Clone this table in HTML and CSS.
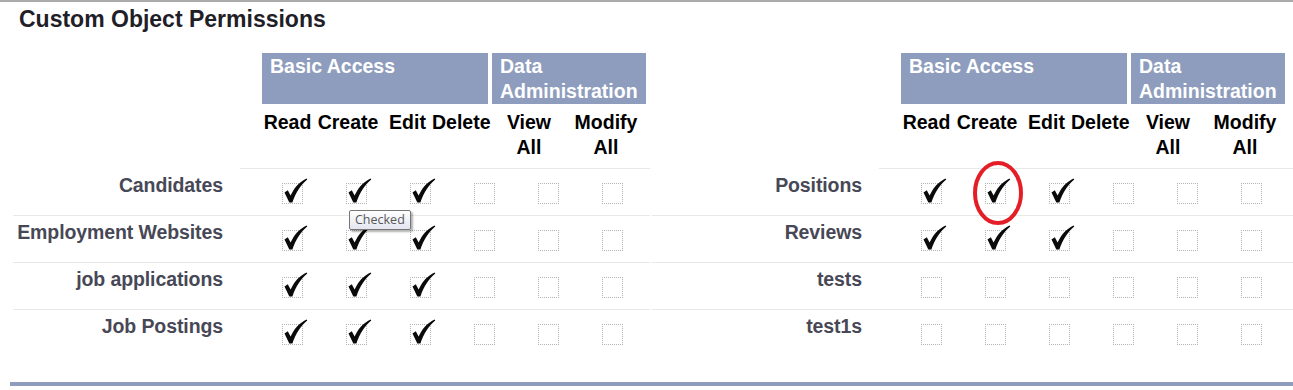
FILE: index.html
```html
<!DOCTYPE html>
<html>
<head>
<meta charset="utf-8">
<link rel="stylesheet" href="styles.css">
</head>
<body>
<div class="page">
  <h2 class="title">Custom Object Permissions</h2>
  <div class="halves">
    <div class="half half-left">
      <div class="hdr-row">
        <div class="lbl-space"></div>
        <div class="data groups">
          <div class="grp grp-basic">Basic Access</div>
          <div class="grp grp-admin">Data Administration</div>
        </div>
      </div>
      <div class="col-row">
        <div class="lbl-space"></div>
        <div class="data cols">
          <div class="col">Read</div>
          <div class="col">Create</div>
          <div class="col">Edit</div>
          <div class="col">Delete</div>
          <div class="col col-view">View<br>All</div>
          <div class="col">Modify<br>All</div>
        </div>
      </div>
      <div class="row">
        <div class="lbl">Candidates</div>
        <div class="data cells">
          <span class="cb"><svg class="tick" viewBox="0 0 26 28"><path d="M1.5,14.5 L4.8,12.2 L7.6,17.6 C11,10 16,4 23.5,0.4 L24.3,1.6 C18.2,6.4 12.8,14.2 9.4,24.6 L6.3,24.6 Z"/></svg></span>
          <span class="cb"><svg class="tick" viewBox="0 0 26 28"><path d="M1.5,14.5 L4.8,12.2 L7.6,17.6 C11,10 16,4 23.5,0.4 L24.3,1.6 C18.2,6.4 12.8,14.2 9.4,24.6 L6.3,24.6 Z"/></svg></span>
          <span class="cb"><svg class="tick" viewBox="0 0 26 28"><path d="M1.5,14.5 L4.8,12.2 L7.6,17.6 C11,10 16,4 23.5,0.4 L24.3,1.6 C18.2,6.4 12.8,14.2 9.4,24.6 L6.3,24.6 Z"/></svg></span>
          <span class="cb"></span>
          <span class="cb"></span>
          <span class="cb"></span>
        </div>
      </div>
      <div class="row">
        <div class="lbl">Employment Websites</div>
        <div class="data cells">
          <span class="cb"><svg class="tick" viewBox="0 0 26 28"><path d="M1.5,14.5 L4.8,12.2 L7.6,17.6 C11,10 16,4 23.5,0.4 L24.3,1.6 C18.2,6.4 12.8,14.2 9.4,24.6 L6.3,24.6 Z"/></svg></span>
          <span class="cb"><svg class="tick" viewBox="0 0 26 28"><path d="M1.5,14.5 L4.8,12.2 L7.6,17.6 C11,10 16,4 23.5,0.4 L24.3,1.6 C18.2,6.4 12.8,14.2 9.4,24.6 L6.3,24.6 Z"/></svg></span>
          <span class="cb"><svg class="tick" viewBox="0 0 26 28"><path d="M1.5,14.5 L4.8,12.2 L7.6,17.6 C11,10 16,4 23.5,0.4 L24.3,1.6 C18.2,6.4 12.8,14.2 9.4,24.6 L6.3,24.6 Z"/></svg></span>
          <span class="cb"></span>
          <span class="cb"></span>
          <span class="cb"></span>
        </div>
      </div>
      <div class="row">
        <div class="lbl">job applications</div>
        <div class="data cells">
          <span class="cb"><svg class="tick" viewBox="0 0 26 28"><path d="M1.5,14.5 L4.8,12.2 L7.6,17.6 C11,10 16,4 23.5,0.4 L24.3,1.6 C18.2,6.4 12.8,14.2 9.4,24.6 L6.3,24.6 Z"/></svg></span>
          <span class="cb"><svg class="tick" viewBox="0 0 26 28"><path d="M1.5,14.5 L4.8,12.2 L7.6,17.6 C11,10 16,4 23.5,0.4 L24.3,1.6 C18.2,6.4 12.8,14.2 9.4,24.6 L6.3,24.6 Z"/></svg></span>
          <span class="cb"><svg class="tick" viewBox="0 0 26 28"><path d="M1.5,14.5 L4.8,12.2 L7.6,17.6 C11,10 16,4 23.5,0.4 L24.3,1.6 C18.2,6.4 12.8,14.2 9.4,24.6 L6.3,24.6 Z"/></svg></span>
          <span class="cb"></span>
          <span class="cb"></span>
          <span class="cb"></span>
        </div>
      </div>
      <div class="row row-last">
        <div class="lbl">Job Postings</div>
        <div class="data cells">
          <span class="cb"><svg class="tick" viewBox="0 0 26 28"><path d="M1.5,14.5 L4.8,12.2 L7.6,17.6 C11,10 16,4 23.5,0.4 L24.3,1.6 C18.2,6.4 12.8,14.2 9.4,24.6 L6.3,24.6 Z"/></svg></span>
          <span class="cb"><svg class="tick" viewBox="0 0 26 28"><path d="M1.5,14.5 L4.8,12.2 L7.6,17.6 C11,10 16,4 23.5,0.4 L24.3,1.6 C18.2,6.4 12.8,14.2 9.4,24.6 L6.3,24.6 Z"/></svg></span>
          <span class="cb"><svg class="tick" viewBox="0 0 26 28"><path d="M1.5,14.5 L4.8,12.2 L7.6,17.6 C11,10 16,4 23.5,0.4 L24.3,1.6 C18.2,6.4 12.8,14.2 9.4,24.6 L6.3,24.6 Z"/></svg></span>
          <span class="cb"></span>
          <span class="cb"></span>
          <span class="cb"></span>
        </div>
      </div>
    </div>

    <div class="half half-right">
      <div class="hdr-row">
        <div class="lbl-space"></div>
        <div class="data groups">
          <div class="grp grp-basic">Basic Access</div>
          <div class="grp grp-admin">Data Administration</div>
        </div>
      </div>
      <div class="col-row">
        <div class="lbl-space"></div>
        <div class="data cols">
          <div class="col">Read</div>
          <div class="col">Create</div>
          <div class="col">Edit</div>
          <div class="col">Delete</div>
          <div class="col col-view">View<br>All</div>
          <div class="col">Modify<br>All</div>
        </div>
      </div>
      <div class="row">
        <div class="lbl">Positions</div>
        <div class="data cells">
          <span class="cb"><svg class="tick" viewBox="0 0 26 28"><path d="M1.5,14.5 L4.8,12.2 L7.6,17.6 C11,10 16,4 23.5,0.4 L24.3,1.6 C18.2,6.4 12.8,14.2 9.4,24.6 L6.3,24.6 Z"/></svg></span>
          <span class="cb"><svg class="tick" viewBox="0 0 26 28"><path d="M1.5,14.5 L4.8,12.2 L7.6,17.6 C11,10 16,4 23.5,0.4 L24.3,1.6 C18.2,6.4 12.8,14.2 9.4,24.6 L6.3,24.6 Z"/></svg></span>
          <span class="cb"><svg class="tick" viewBox="0 0 26 28"><path d="M1.5,14.5 L4.8,12.2 L7.6,17.6 C11,10 16,4 23.5,0.4 L24.3,1.6 C18.2,6.4 12.8,14.2 9.4,24.6 L6.3,24.6 Z"/></svg></span>
          <span class="cb"></span>
          <span class="cb"></span>
          <span class="cb"></span>
        </div>
      </div>
      <div class="row">
        <div class="lbl">Reviews</div>
        <div class="data cells">
          <span class="cb"><svg class="tick" viewBox="0 0 26 28"><path d="M1.5,14.5 L4.8,12.2 L7.6,17.6 C11,10 16,4 23.5,0.4 L24.3,1.6 C18.2,6.4 12.8,14.2 9.4,24.6 L6.3,24.6 Z"/></svg></span>
          <span class="cb"><svg class="tick" viewBox="0 0 26 28"><path d="M1.5,14.5 L4.8,12.2 L7.6,17.6 C11,10 16,4 23.5,0.4 L24.3,1.6 C18.2,6.4 12.8,14.2 9.4,24.6 L6.3,24.6 Z"/></svg></span>
          <span class="cb"><svg class="tick" viewBox="0 0 26 28"><path d="M1.5,14.5 L4.8,12.2 L7.6,17.6 C11,10 16,4 23.5,0.4 L24.3,1.6 C18.2,6.4 12.8,14.2 9.4,24.6 L6.3,24.6 Z"/></svg></span>
          <span class="cb"></span>
          <span class="cb"></span>
          <span class="cb"></span>
        </div>
      </div>
      <div class="row">
        <div class="lbl">tests</div>
        <div class="data cells">
          <span class="cb"></span>
          <span class="cb"></span>
          <span class="cb"></span>
          <span class="cb"></span>
          <span class="cb"></span>
          <span class="cb"></span>
        </div>
      </div>
      <div class="row row-last">
        <div class="lbl">test1s</div>
        <div class="data cells">
          <span class="cb"></span>
          <span class="cb"></span>
          <span class="cb"></span>
          <span class="cb"></span>
          <span class="cb"></span>
          <span class="cb"></span>
        </div>
      </div>
    </div>
  </div>
  <div class="bottom-rule"></div>

  <div class="tooltip">Checked</div>
  <svg class="circle" viewBox="0 0 56 70"><ellipse cx="28" cy="35" rx="23" ry="30"/></svg>
</div>
</body>
</html>
```

FILE: styles.css
```css
html, body {
  margin: 0;
  padding: 0;
  background: #fff;
}

.page {
  position: relative;
  width: 1293px;
  height: 390px;
  border-top: 2px solid #ababab;
  box-sizing: border-box;
  font-family: "Liberation Sans", Arial, sans-serif;
  overflow: hidden;
}

.title {
  margin: 3px 0 0 19px;
  font-size: 23px;
  line-height: 28px;
  font-weight: bold;
  color: #1f2027;
}

.halves {
  display: flex;
  gap: 2px;
  margin: 20px 0 0 13px;
}

.half-left {
  width: 637px;
  flex: none;
}

.half-right {
  flex: 1;
}

.hdr-row,
.col-row,
.row {
  display: flex;
}

.lbl-space,
.lbl {
  width: 227px;
  flex: none;
  box-sizing: border-box;
}

.data {
  flex: 1;
}

.groups {
  display: flex;
  gap: 4px;
  padding-left: 22px;
}

.grp {
  background: #8e9dbd;
  color: #fff;
  font-weight: bold;
  font-size: 19.5px;
  line-height: 25px;
  padding: 1px 0 0 8px;
  box-sizing: border-box;
  height: 51px;
}

.grp-basic {
  width: 226px;
}

.grp-admin {
  width: 154px;
}

.cols {
  display: grid;
  grid-template-columns: 51px 70px 49px 56px 78px 80px;
  padding: 6px 0 8px 22px;
  border-bottom: 1px solid #e8e8e8;
}

.col {
  font-weight: bold;
  font-size: 19.5px;
  line-height: 25px;
  color: #000;
  text-align: center;
}

.col-view {
  padding-left: 4px;
}

.row {
  height: 47px;
  box-sizing: border-box;
  border-bottom: 1px solid #e8e8e8;
}

.row-last {
  border-bottom: none;
}

.lbl {
  padding: 4px 17px 0 0;
  text-align: right;
  font-weight: bold;
  font-size: 19.5px;
  letter-spacing: -0.1px;
  line-height: 25px;
  color: #474856;
  white-space: nowrap;
}

.cells {
  display: grid;
  grid-template-columns: repeat(6, 64px);
  justify-items: center;
  align-items: start;
  padding: 14px 0 0 20px;
}

.cb {
  position: relative;
  display: block;
  width: 19px;
  height: 19px;
  border: 1px dotted #b4b4b4;
}

.tick {
  position: absolute;
  left: 0px;
  top: -6px;
  width: 26px;
  height: 28px;
  fill: #0a0a0a;
}

.bottom-rule {
  margin: 25px 0 0 10px;
  border-top: 4px solid #8e9dbd;
}

.tooltip {
  position: absolute;
  left: 349px;
  top: 208px;
  height: 18px;
  padding: 0 5px;
  border: 1px solid #767676;
  border-radius: 2px;
  background: linear-gradient(#ffffff, #e4e5f0);
  box-shadow: 2px 2px 2px rgba(0, 0, 0, 0.3);
  font-family: "Open Sans", "Noto Sans", sans-serif;
  font-size: 12.5px;
  line-height: 18px;
  color: #575757;
}

.circle {
  position: absolute;
  left: 970px;
  top: 156px;
  width: 56px;
  height: 70px;
  fill: none;
  stroke: #e41e26;
  stroke-width: 4;
}
```
